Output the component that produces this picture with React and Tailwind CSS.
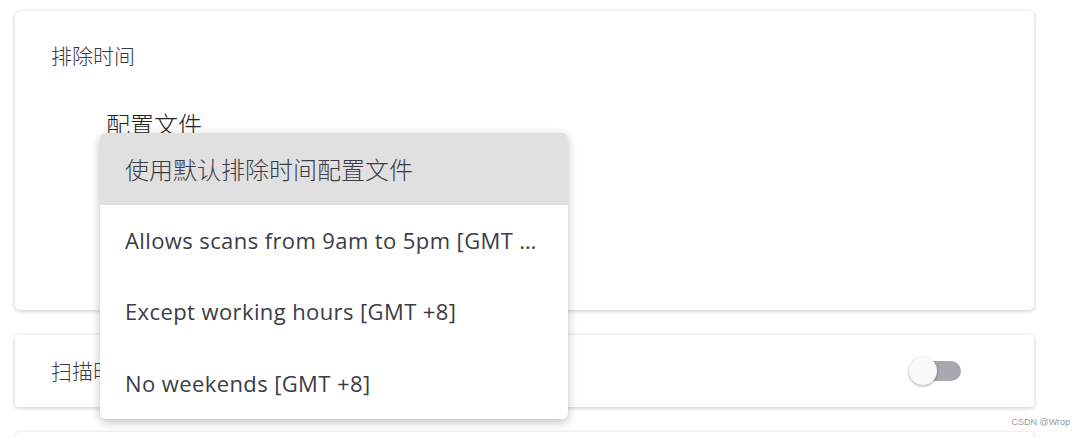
import React from 'react'

const options = [
  '使用默认排除时间配置文件',
  'Allows scans from 9am to 5pm [GMT +8]',
  'Except working hours [GMT +8]',
  'No weekends [GMT +8]',
]

const cjk = { fontFamily: '"Noto Sans CJK SC", sans-serif' }

function Toggle() {
  return (
    <div className="relative w-[54px] h-[28px] flex items-center">
      <div className="ml-[12px] w-[40px] h-[20px] rounded-full bg-[#a9a8ae]" />
      <div className="absolute left-0 top-0 w-[28px] h-[28px] rounded-full bg-[#fafafa] shadow-[0_1px_3px_rgba(0,0,0,0.35)]" />
    </div>
  )
}

export default function App() {
  return (
    <div className="relative w-[1084px] h-[438px] bg-white overflow-hidden" style={{ fontFamily: '"Open Sans", "Noto Sans CJK SC", sans-serif' }}>
      <div className="pl-[15px] pt-[11px] w-[1034px] flex flex-col gap-[25px]">
        <div className="h-[299px] rounded-[5px] bg-white shadow-[0_1px_4px_rgba(0,0,0,0.22)] pl-[36px] pt-[29px]">
          <h3 className="text-[21px] font-light text-[#3a3a42] leading-[30px]" style={cjk}>排除时间</h3>
          <div className="ml-[55px] mt-[38px] text-[24px] font-light text-[#222] leading-[32px]" style={cjk}>配置文件</div>
        </div>
        <div className="h-[72px] rounded-[3px] bg-white shadow-[0_1px_4px_rgba(0,0,0,0.22)] pl-[36px] pr-[71px] flex items-center justify-between">
          <span className="text-[21px] font-light text-[#3a3a42]" style={cjk}>扫描时间限制</span>
          <Toggle />
        </div>
        <div className="h-[72px] rounded-[5px] bg-white shadow-[0_1px_4px_rgba(0,0,0,0.22)]" />
      </div>

      <ul className="absolute left-[100px] top-[133px] w-[468px] rounded-[6px] bg-white shadow-[0_3px_10px_rgba(0,0,0,0.25)] overflow-hidden">
        {options.map((o, i) => (
          <li
            key={i}
            className={`h-[71.5px] pl-[25px] pr-[25px] flex items-center text-[#3c3c46] ${i === 0 ? 'bg-[#e0e0e0] text-[24px] font-light' : 'text-[22px] tracking-[0.4px]'}`}
          >
            <span className="truncate" style={i === 0 ? cjk : undefined}>{o}</span>
          </li>
        ))}
      </ul>

      <div className="absolute right-[14px] top-[416px] text-[9px] text-[#999]" style={{ fontFamily: '"Liberation Sans", sans-serif' }}>CSDN @Wrop</div>
    </div>
  )
}
